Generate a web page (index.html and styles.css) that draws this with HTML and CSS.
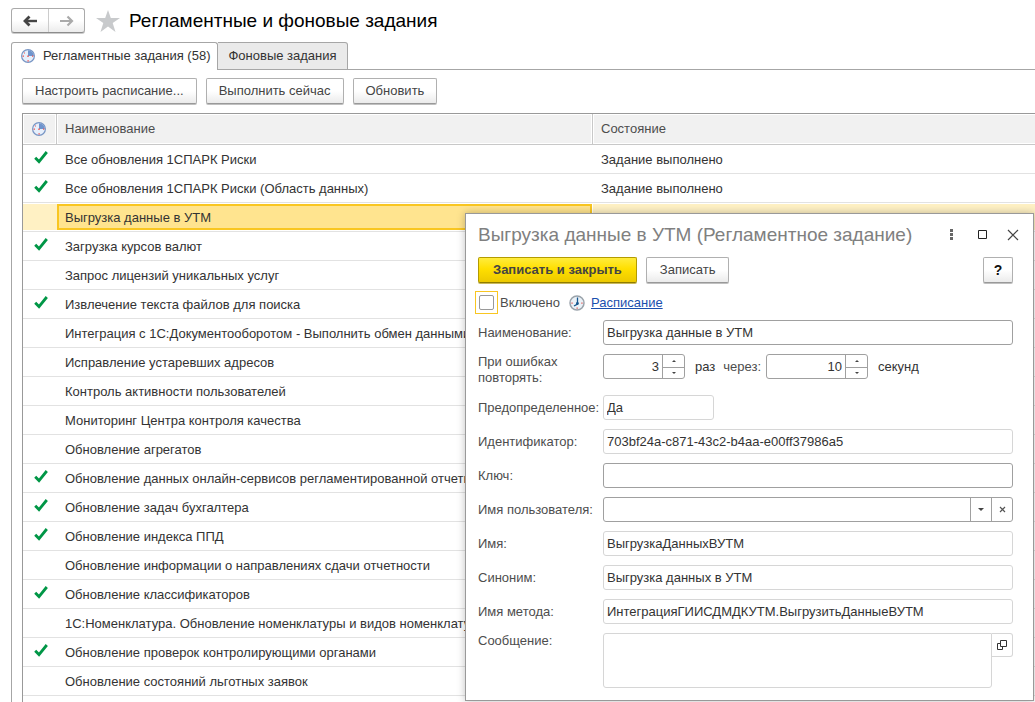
FILE: index.html
```html
<!DOCTYPE html>
<html lang="ru">
<head>
<meta charset="utf-8">
<title>Регламентные и фоновые задания</title>
<link rel="stylesheet" href="styles.css">
</head>
<body>
<svg class="defs" aria-hidden="true">
  <symbol id="check" viewBox="0 0 14 14"><path d="M1.200 7.800 5 11.600 12.800 2" fill="none" stroke="#009646" stroke-width="2.800"/></symbol>
  <symbol id="pie" viewBox="0 0 14 14"><circle cx="7" cy="7" r="6.400" fill="#e6effb" stroke="#7795c4" stroke-width="1.200"/><path d="M7 7V1.200A5.800 5.800 0 0 1 12.800 7Z" fill="#6f94cd"/><path d="M6.400 11.200h1.400v1.400H6.400zM1.600 6.400H3v1.400H1.600zM6.300 6.600h1.400V8H6.300zM11 6.400h1.300v1.300H11zM3 3.500h1v1H3z" fill="#f0524f"/></symbol>
</svg>
<main class="page">
  <header class="page-head">
    <div class="nav">
      <button class="nav-btn" type="button" aria-label="Назад"><svg width="16" height="12" viewBox="0 0 16 12"><path d="M15 6H4" fill="none" stroke="#444" stroke-width="2.400"/><path d="M7.500 1.500 3 6l4.500 4.500" fill="none" stroke="#444" stroke-width="2.800"/></svg></button>
      <button class="nav-btn" type="button" aria-label="Вперед"><svg width="16" height="12" viewBox="0 0 16 12"><path d="M1 6h12M8.500 1.500 13 6l-4.500 4.500" fill="none" stroke="#aaa" stroke-width="2.200"/></svg></button>
    </div>
    <svg class="star" width="24" height="22" viewBox="0 0 24 22"><path d="M12 0 14.8 8H24l-7.3 5 2.8 9L12 16.6 4.500 22l2.800-9L0 8h9.200Z" fill="#c8cacc"/></svg>
    <h1 class="page-title">Регламентные и фоновые задания</h1>
  </header>
  <nav class="tabs">
    <button class="tab tab-active" type="button"><svg width="14" height="14"><use href="#pie"/></svg>Регламентные задания (58)</button>
    <button class="tab" type="button">Фоновые задания</button>
  </nav>
  <section class="panel">
    <div class="toolbar">
      <button class="btn" type="button">Настроить расписание...</button>
      <button class="btn" type="button">Выполнить сейчас</button>
      <button class="btn" type="button">Обновить</button>
    </div>
    <table class="jobs">
      <colgroup><col class="col-mark"><col class="col-name"><col></colgroup>
      <thead><tr><th class="mark"><svg width="14" height="14"><use href="#pie"/></svg></th><th>Наименование</th><th>Состояние</th></tr></thead>
      <tbody>
        <tr><td class="mark"><svg width="14" height="14"><use href="#check"/></svg></td><td>Все обновления 1СПАРК Риски</td><td>Задание выполнено</td></tr>
        <tr><td class="mark"><svg width="14" height="14"><use href="#check"/></svg></td><td>Все обновления 1СПАРК Риски (Область данных)</td><td>Задание выполнено</td></tr>
        <tr class="selected"><td class="mark"></td><td class="current">Выгрузка данные в УТМ</td><td></td></tr>
        <tr><td class="mark"><svg width="14" height="14"><use href="#check"/></svg></td><td>Загрузка курсов валют</td><td></td></tr>
        <tr><td class="mark"></td><td>Запрос лицензий уникальных услуг</td><td></td></tr>
        <tr><td class="mark"><svg width="14" height="14"><use href="#check"/></svg></td><td>Извлечение текста файлов для поиска</td><td></td></tr>
        <tr><td class="mark"></td><td>Интеграция с 1С:Документооборотом - Выполнить обмен данными</td><td></td></tr>
        <tr><td class="mark"></td><td>Исправление устаревших адресов</td><td></td></tr>
        <tr><td class="mark"></td><td>Контроль активности пользователей</td><td></td></tr>
        <tr><td class="mark"></td><td>Мониторинг Центра контроля качества</td><td></td></tr>
        <tr><td class="mark"></td><td>Обновление агрегатов</td><td></td></tr>
        <tr><td class="mark"><svg width="14" height="14"><use href="#check"/></svg></td><td>Обновление данных онлайн-сервисов регламентированной отчетно</td><td></td></tr>
        <tr><td class="mark"><svg width="14" height="14"><use href="#check"/></svg></td><td>Обновление задач бухгалтера</td><td></td></tr>
        <tr><td class="mark"><svg width="14" height="14"><use href="#check"/></svg></td><td>Обновление индекса ППД</td><td></td></tr>
        <tr><td class="mark"></td><td>Обновление информации о направлениях сдачи отчетности</td><td></td></tr>
        <tr><td class="mark"><svg width="14" height="14"><use href="#check"/></svg></td><td>Обновление классификаторов</td><td></td></tr>
        <tr><td class="mark"></td><td>1С:Номенклатура. Обновление номенклатуры и видов номенклату</td><td></td></tr>
        <tr><td class="mark"><svg width="14" height="14"><use href="#check"/></svg></td><td>Обновление проверок контролирующими органами</td><td></td></tr>
        <tr><td class="mark"></td><td>Обновление состояний льготных заявок</td><td></td></tr>
        <tr><td class="mark"><svg width="14" height="14"><use href="#check"/></svg></td><td></td><td></td></tr>
      </tbody>
    </table>
  </section>
</main>

<form class="dialog" role="dialog" aria-labelledby="dlg-title">
  <header class="dlg-head">
    <h2 class="dlg-title" id="dlg-title">Выгрузка данные в УТМ (Регламентное задание)</h2>
    <button class="win-btn" type="button" aria-label="Меню"><svg width="12" height="12"><path d="M5 0h3v3H5zM5 4h3v3H5zM5 8h3v3H5z" fill="#666"/></svg></button>
    <button class="win-btn" type="button" aria-label="Развернуть"><svg width="12" height="12"><path d="M2.500 1.500h8v8h-8z" fill="none" stroke="#222"/></svg></button>
    <button class="win-btn" type="button" aria-label="Закрыть"><svg width="12" height="12"><path d="M1 1l10 10M11 1 1 11" stroke="#444" stroke-width="1.200"/></svg></button>
  </header>
  <div class="dlg-bar">
    <button class="btn btn-main" type="submit">Записать и закрыть</button>
    <button class="btn" type="button">Записать</button>
    <button class="btn btn-help" type="button">?</button>
  </div>
  <div class="enable">
    <span class="focus-box"><input class="tick" type="checkbox" id="enabled"></span>
    <label for="enabled">Включено</label>
    <svg class="clock" width="16" height="16" viewBox="0 0 16 16"><circle cx="8" cy="8" r="7" fill="#eaf1f7" stroke="#9aa3ab" stroke-width="1.500"/><path d="M8.500 2.500V9L5 11" fill="none" stroke="#16578f" stroke-width="1.300"/><circle cx="8.400" cy="8.500" r="1.400" fill="#16578f"/><path d="M2.400 7.500h1.300v1.300H2.400zM12.300 7.500h1.300v1.300h-1.300zM7.500 12.500h1.300v1.300H7.500z" fill="#e25a55"/></svg>
    <a class="link" href="#schedule">Расписание</a>
  </div>
  <div class="fields">
    <label for="name">Наименование:</label>
    <input class="field" id="name" type="text" value="Выгрузка данные в УТМ">

    <label class="two-line" for="retries">При ошибках повторять:</label>
    <div class="retry">
      <span class="spin spin-s"><input class="spin-input" id="retries" type="text" inputmode="numeric" value="3"><span class="steps"><button type="button" aria-label="Больше"><svg width="4" height="2"><path d="M0 2 2 0 4 2Z"/></svg></button><button type="button" aria-label="Меньше"><svg width="4" height="2"><path d="M0 0 2 2 4 0Z"/></svg></button></span></span>
      <span>раз</span>
      <label for="pause">через:</label>
      <span class="spin spin-m"><input class="spin-input" id="pause" type="text" inputmode="numeric" value="10"><span class="steps"><button type="button" aria-label="Больше"><svg width="4" height="2"><path d="M0 2 2 0 4 2Z"/></svg></button><button type="button" aria-label="Меньше"><svg width="4" height="2"><path d="M0 0 2 2 4 0Z"/></svg></button></span></span>
      <span class="unit">секунд</span>
    </div>

    <label for="predef">Предопределенное:</label>
    <input class="field readonly short" id="predef" type="text" readonly value="Да">

    <label for="ident">Идентификатор:</label>
    <input class="field readonly" id="ident" type="text" readonly value="703bf24a-c871-43c2-b4aa-e00ff37986a5">

    <label for="key">Ключ:</label>
    <input class="field" id="key" type="text">

    <label for="user">Имя пользователя:</label>
    <div class="combo">
      <select class="combo-select" id="user"><option></option></select>
      <span class="combo-arrow"><svg width="6" height="3"><path d="M0 0h6L3 3Z"/></svg></span>
      <button class="combo-clear" type="button" aria-label="Очистить"><svg width="7" height="7"><path d="M1 1l5 5M6 1 1 6" stroke="#555" stroke-width="1.200"/></svg></button>
    </div>

    <label for="method">Имя:</label>
    <input class="field readonly" id="method" type="text" readonly value="ВыгрузкаДанныхВУТМ">

    <label for="synonym">Синоним:</label>
    <input class="field readonly" id="synonym" type="text" readonly value="Выгрузка данных в УТМ">

    <label for="method-name">Имя метода:</label>
    <input class="field readonly" id="method-name" type="text" readonly value="ИнтеграцияГИИСДМДКУТМ.ВыгрузитьДанныеВУТМ">

    <label for="message" class="top">Сообщение:</label>
    <div class="message">
      <textarea class="message-text" id="message" readonly></textarea>
      <button class="message-open" type="button" aria-label="Открыть"><svg width="10" height="10"><path d="M3.500.5h6v6h-6zM3 3.500H.5v6h5V7" fill="none" stroke="#333"/></svg></button>
    </div>
  </div>
</form>
</body>
</html>
```
FILE: styles.css
```css
* { box-sizing: border-box; }

body {
  margin: 0;
  height: 100vh;
  overflow: hidden;
  position: relative;
  background: #fff;
  color: #333;
  font: 13px/16px "Liberation Sans", Arial, sans-serif;
}

button, input, select, textarea { font: inherit; color: inherit; margin: 0; }
svg { display: block; flex: none; }
.defs { position: absolute; width: 0; height: 0; }

/* Page */
.page { padding: 8px 0 0 11px; }
.page-head { display: flex; align-items: center; height: 25px; }
.nav {
  display: flex;
  height: 25px;
  border: 1px solid #aaa;
  border-bottom-color: #8c8c8c;
  border-radius: 3px;
  background: linear-gradient(#fff 50%, #ececec);
  box-shadow: 0 1px 0 #ccc;
}
.nav-btn {
  width: 36px;
  padding: 0;
  border: 0;
  background: none;
  display: grid;
  place-items: center;
}
.nav-btn + .nav-btn { border-left: 1px solid #ccc; }
.star { margin: 0 9px 0 11px; }
.page-title { margin: 0; font-size: 19px; line-height: 24px; font-weight: 400; color: #000; }

.tabs {
  display: flex;
  margin-top: 9px;
  height: 28px;
  box-shadow: inset 0 -1px 0 #a6a6a6;
}
.tab {
  display: flex;
  align-items: center;
  gap: 8px;
  padding: 0 10px;
  border: 1px solid #a6a6a6;
  border-left: 0;
  border-radius: 0 3px 0 0;
  background: #eaeaea;
}
.tab-active {
  padding: 0 7px 2px 9px;
  border-left: 1px solid #a6a6a6;
  border-bottom: 0;
  border-radius: 3px 3px 0 0;
  background: #fff;
}

.panel { border-left: 1px solid #a6a6a6; padding: 8px 0 0 10px; }
.toolbar { display: flex; gap: 9px; margin-bottom: 9px; }
.btn {
  height: 26px;
  padding: 0 12px;
  border: 1px solid #b0b0b0;
  border-bottom-color: #999;
  border-radius: 2px;
  background: linear-gradient(#fff 50%, #ebebeb);
  box-shadow: 0 1px 0 #c0c0c0;
  color: #444;
  white-space: nowrap;
}

.jobs {
  width: 100%;
  table-layout: fixed;
  border-collapse: separate;
  border-spacing: 0;
  border-top: 1px solid #999;
  border-left: 1px solid #999;
}
.col-mark { width: 34px; }
.col-name { width: 536px; }
.jobs th {
  height: 31px;
  padding: 0 8px;
  text-align: left;
  font-weight: 400;
  color: #4d4d4d;
  background: #f1f1f1;
  border-bottom: 1px solid #c8c8c8;
  border-right: 1px solid #c8c8c8;
  box-shadow: inset 0 0 0 1px #fff;
}
.jobs th:last-child { border-right: 0; box-shadow: inset 1px 1px 0 #fff, inset 0 -1px 0 #fff; }
.jobs td {
  height: 29px;
  padding: 1px 8px 0;
  border-bottom: 1px solid #e2e2e2;
  white-space: nowrap;
  overflow: hidden;
}
.jobs .mark { padding: 0 8px 0 9px; }
.jobs td.mark { padding: 0 8px 5px 11px; }
.selected td { background: #fff1c4; box-shadow: inset 0 1px 0 #fff, inset 0 -1px 0 #fff; }
.selected .current {
  background: #ffe48f;
  border-right: 1px solid #fff;
  box-shadow: inset 0 1px 0 #fff, inset 0 -1px 0 #fff, inset 0 3px 0 #f9c621, inset 0 -3px 0 #f9c621, inset 2px 0 0 #f9c621, inset -2px 0 0 #f9c621;
}

/* Dialog window */
.dialog {
  position: absolute;
  top: 213px;
  left: 465px;
  right: 1px;
  padding: 8px 20px 12px 12px;
  background: #fff;
  border: 1px solid #999;
  box-shadow: 0 0 8px rgba(0, 0, 0, .25);
  color: #4d4d4d;
}
.dlg-head { display: flex; align-items: center; height: 26px; }
.dlg-title { flex: 1; margin: 0; font-size: 19px; line-height: 24px; font-weight: 400; color: #808080; white-space: nowrap; }
.win-btn { width: 12px; height: 12px; padding: 0; border: 0; background: none; margin-left: 19px; }
.win-btn:last-child { margin-right: -6px; }
.dlg-bar { display: flex; gap: 9px; margin-top: 9px; }
.dlg-bar .btn { padding: 0 13px; }
.dlg-bar .btn-main {
  padding: 0 14px;
  font-weight: 700;
  border-color: #b39b00;
  border-bottom-color: #8f7c00;
  background: linear-gradient(#ffec3d, #ffdf00 45%, #ecc900);
  box-shadow: 0 1px 0 #c9b95c;
}
.dlg-bar .btn-help { margin-left: auto; width: 30px; padding: 0; font-weight: 700; font-size: 14px; color: #111; }

.enable { display: flex; align-items: center; height: 23px; margin: 8px 0 6px -3px; }
.focus-box { display: grid; place-items: center; width: 23px; height: 23px; border: 1px solid #f9c621; margin-right: 2px; }
.tick { appearance: none; width: 15px; height: 15px; border: 1px solid #999; border-radius: 2px; background: #fff; }
.tick:checked { background: #009646; }
.clock { margin: 0 6px 0 9px; }
.link { color: #1a4fae; }

.fields { display: grid; grid-template-columns: 116px 1fr; column-gap: 9px; row-gap: 9px; }
.fields > label { align-self: center; white-space: nowrap; }
.fields > .two-line { white-space: normal; }
.fields > .top { align-self: start; }
.field {
  width: 100%;
  height: 25px;
  padding: 0 3px;
  border: 1px solid #a0a0a0;
  border-radius: 3px;
  background: #fff;
  color: #333;
}
.readonly { border-color: #d6d6d6; }
.short { width: 111px; }

.retry { display: flex; align-items: center; align-self: start; height: 25px; color: #333; }
.retry label { margin: 0 5px 0 8px; color: #4d4d4d; }
.spin { display: flex; height: 25px; border: 1px solid #a0a0a0; border-radius: 3px; }
.spin-s { width: 82px; margin-right: 10px; }
.spin-m { width: 102px; }
.spin-input { flex: 1; min-width: 0; border: 0; padding: 0 3px; background: none; text-align: right; }
.steps { display: grid; grid-template-rows: 1fr 1fr; width: 22px; border-left: 1px solid #a0a0a0; }
.steps button { display: grid; place-items: center; padding: 0; border: 0; background: none; fill: #444; }
.steps button + button { border-top: 1px solid #a0a0a0; }
.unit { margin-left: 10px; }

.combo { display: grid; grid-template-columns: 1fr 21px 21px; height: 25px; border: 1px solid #a0a0a0; border-radius: 3px; }
.combo-select { grid-area: 1 / 1 / 2 / 3; appearance: none; border: 0; padding: 0 3px; background: none; }
.combo-arrow { grid-area: 1 / 2; display: grid; place-items: center; border-left: 1px solid #a0a0a0; pointer-events: none; fill: #444; }
.combo-clear { grid-area: 1 / 3; display: grid; place-items: center; padding: 0; border: 0; border-left: 1px solid #a0a0a0; background: none; }

.message { display: flex; align-items: flex-start; }
.message-text { flex: 1; height: 55px; padding: 3px; border: 1px solid #d6d6d6; border-radius: 3px 0 3px 3px; resize: none; background: #fff; }
.message-open { display: grid; place-items: center; width: 21px; height: 24px; padding: 0; border: 1px solid #d6d6d6; border-left: 0; border-radius: 0 3px 3px 0; background: #fff; }
```
